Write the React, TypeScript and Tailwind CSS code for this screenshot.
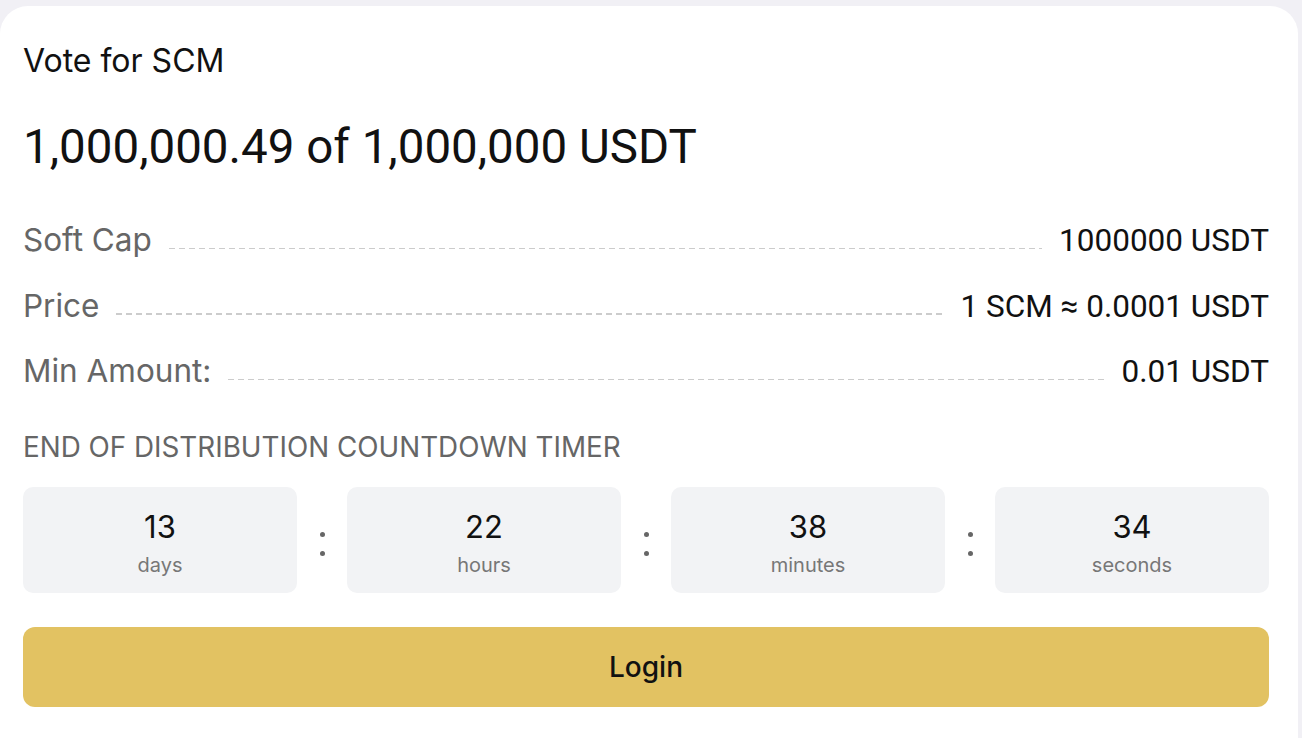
import { Fragment } from "react"

const rows = [
  { label: "Soft Cap", value: "1000000 USDT" },
  { label: "Price", value: "1 SCM ≈ 0.0001 USDT" },
  { label: "Min Amount:", value: "0.01 USDT" },
]

const timer = [
  { value: "13", unit: "days" },
  { value: "22", unit: "hours" },
  { value: "38", unit: "minutes" },
  { value: "34", unit: "seconds" },
]

const App = () => {
  return (
    <div className="min-h-screen bg-[#f1f0f5] pt-[6px] overflow-hidden font-['Inter',sans-serif]">
      <div className="w-[1298px] min-h-[760px] bg-white rounded-[28px] pl-[23px] pr-[29px] pt-[37px]">
        {/* Title */}
        <h2 className="text-[32px] leading-[36px] text-[#111]">Vote for SCM</h2>

        {/* Raised amount */}
        <div className="mt-[40px] font-['Roboto',sans-serif] text-[47.5px] leading-[56px] text-[#111]">
          1,000,000.49 of 1,000,000 USDT
        </div>

        {/* Details */}
        <div className="mt-[45px] flex flex-col gap-[24.5px]">
          {rows.map((row) => (
            <div key={row.label} className="flex items-baseline gap-[17px] leading-[40px]">
              <span className="text-[31.5px] text-[#666]">{row.label}</span>
              <div className="flex-1 h-[1.5px] relative -top-[2px] bg-[repeating-linear-gradient(to_right,#cccccc_0_6px,transparent_6px_10px)]" />
              <span className="font-['Roboto',sans-serif] text-[31.5px] text-[#111]">{row.value}</span>
            </div>
          ))}
        </div>

        {/* Countdown */}
        <div className="mt-[39px] text-[27.8px] leading-[32px] text-[#666]">
          END OF DISTRIBUTION COUNTDOWN TIMER
        </div>

        <div className="mt-[24px] flex">
          {timer.map((t, i) => (
            <Fragment key={t.unit}>
              {i > 0 && (
                <div className="w-[50px] flex flex-col items-center justify-center gap-[14px] pt-[7px]">
                  <span className="w-[5px] h-[5px] rounded-full bg-[#666]" />
                  <span className="w-[5px] h-[5px] rounded-full bg-[#666]" />
                </div>
              )}
              <div className="w-[274px] h-[106px] rounded-[10px] bg-[#f2f3f5] flex flex-col items-center pt-[22px]">
                <span className="text-[31px] leading-[36px] text-[#111]">{t.value}</span>
                <span className="mt-[8px] text-[20px] leading-[24px] text-[#777]">{t.unit}</span>
              </div>
            </Fragment>
          ))}
        </div>

        {/* Action */}
        <button className="mt-[34px] w-full h-[80px] rounded-[12px] bg-[#e2c262] text-[28px] font-medium text-[#111]">
          Login
        </button>
      </div>
    </div>
  )
}

export default App
